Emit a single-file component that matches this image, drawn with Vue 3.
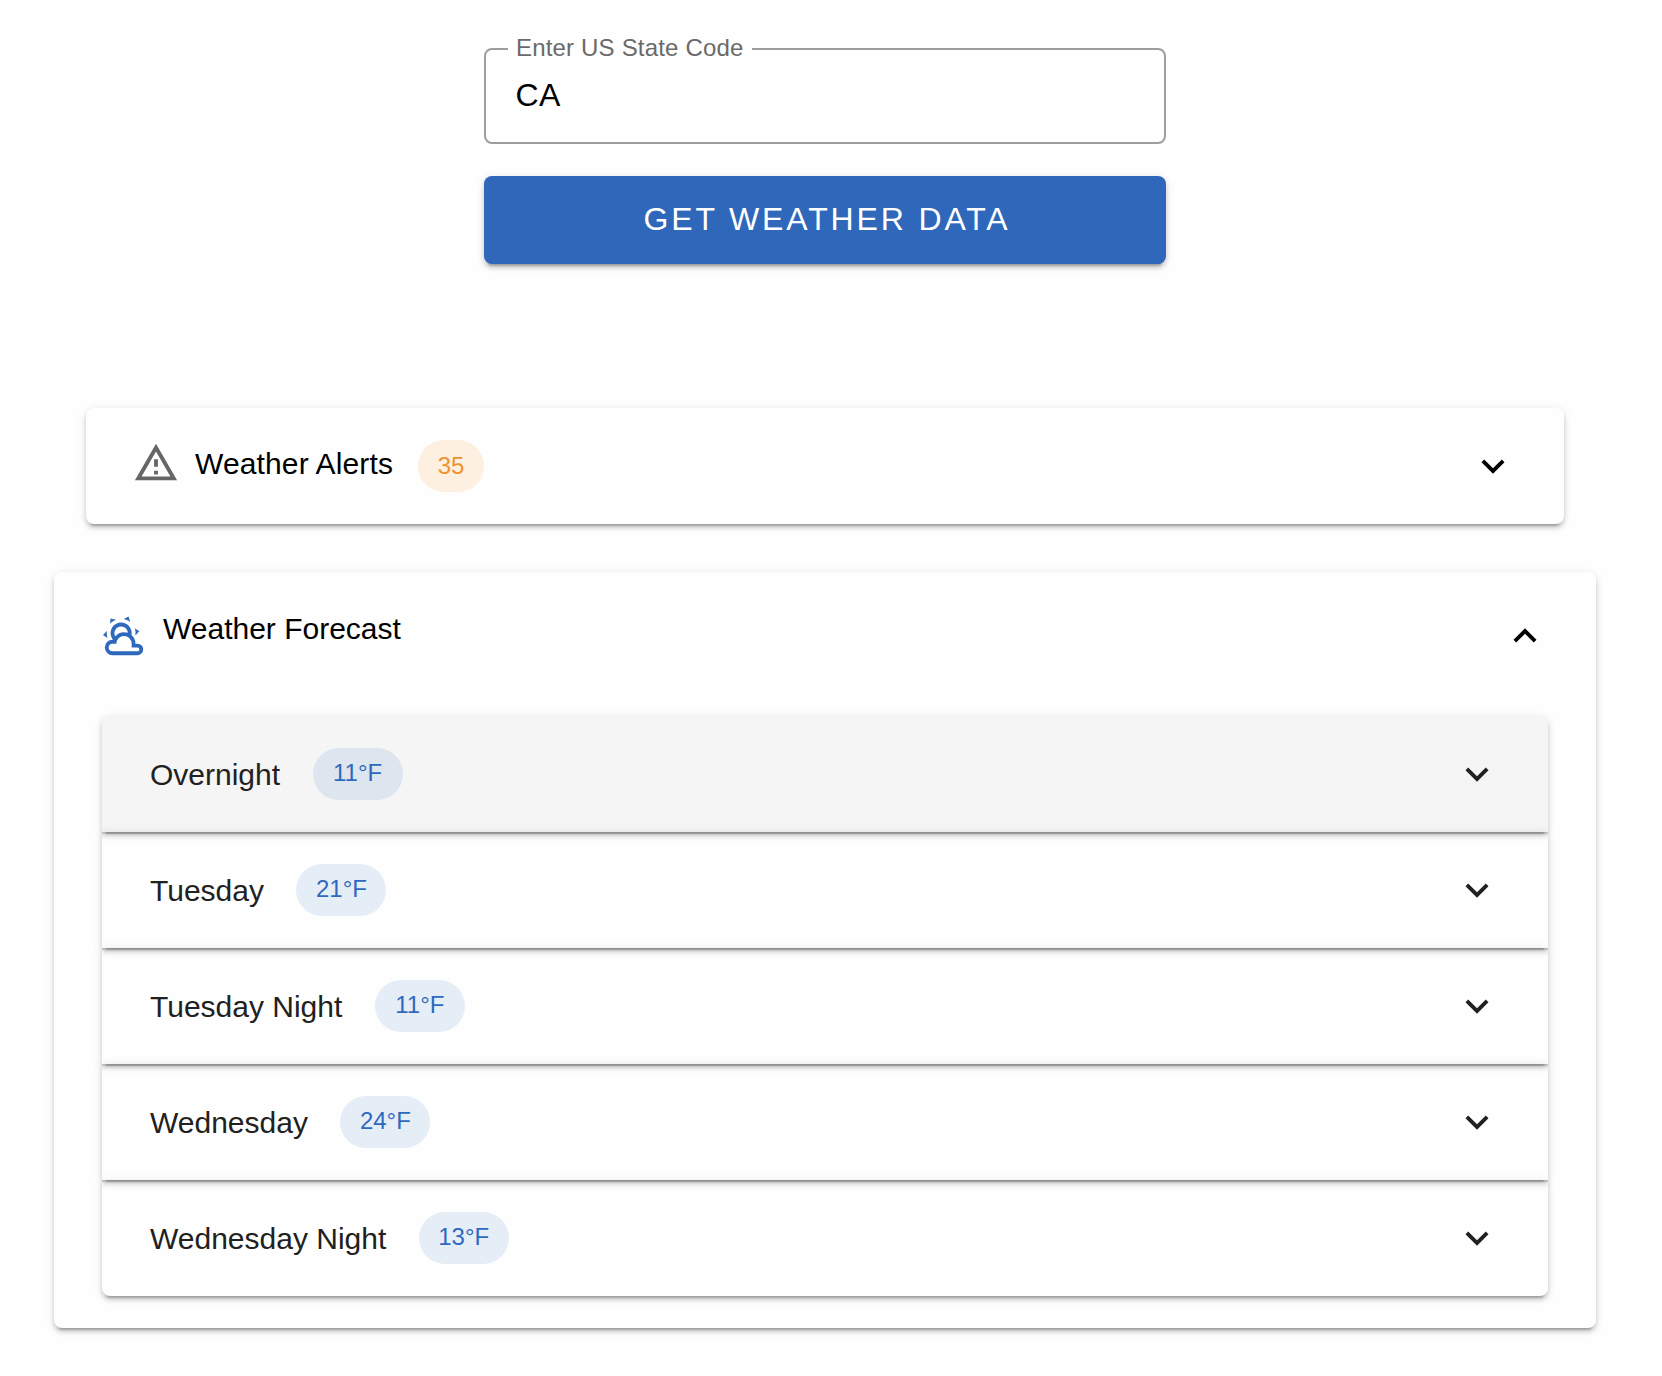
<script setup>
import { ref } from 'vue'

const stateCode = ref('CA')
const alertCount = 35
const periods = [
  { name: 'Overnight', temp: '11°F', active: true },
  { name: 'Tuesday', temp: '21°F' },
  { name: 'Tuesday Night', temp: '11°F' },
  { name: 'Wednesday', temp: '24°F' },
  { name: 'Wednesday Night', temp: '13°F' },
]

const icons = {
  down: 'M7.41,8.58L12,13.17L16.59,8.58L18,10L12,16L6,10L7.41,8.58Z',
  up: 'M7.41,15.41L12,10.83L16.59,15.41L18,14L12,8L6,14L7.41,15.41Z',
  alert: 'M12,2L1,21H23M12,6L19.53,19H4.47M11,10V14H13V10M11,16V18H13V16',
  weather:
    'M12.74,5.47C15.1,6.5 16.35,9.03 15.92,11.46C17.19,12.56 18,14.19 18,16V16.17C18.31,16.06 18.65,16 19,16A3,3 0 0,1 22,19A3,3 0 0,1 19,22H6A4,4 0 0,1 2,18A4,4 0 0,1 6,14H6.27C5,12.45 4.6,10.24 5.5,8.26C6.72,5.5 9.97,4.24 12.74,5.47M11.93,7.3C10.16,6.5 8.09,7.31 7.31,9.07C6.85,10.09 6.93,11.22 7.41,12.13C8.5,10.83 10.16,10 12,10C12.7,10 13.38,10.12 14,10.34C13.94,9.06 13.18,7.86 11.93,7.3M13.55,3.64C13,3.4 12.45,3.23 11.88,3.12L14.37,1.82L15.27,4.71C14.76,4.29 14.19,3.93 13.55,3.64M6.09,4.44C5.6,4.79 5.17,5.19 4.8,5.63L4.91,2.82L7.87,3.5C7.25,3.71 6.65,4.03 6.09,4.44M18,9.71C17.91,9.12 17.78,8.55 17.59,8L19.97,9.5L17.92,11.73C18.03,11.08 18.05,10.4 18,9.71M3.04,11.3C3.11,11.9 3.24,12.47 3.43,13L1.06,11.5L3.1,9.28C3,9.93 2.97,10.61 3.04,11.3M19,18H16V16A4,4 0 0,0 12,12A4,4 0 0,0 8,16H6A2,2 0 0,0 4,18A2,2 0 0,0 6,20H19A1,1 0 0,0 20,19A1,1 0 0,0 19,18Z',
}
</script>

<template>
  <main class="page">
    <form class="form" @submit.prevent>
      <div class="field">
        <label class="field-label" for="state">Enter US State Code</label>
        <input id="state" v-model="stateCode" class="field-input" type="text" />
      </div>
      <button class="submit" type="submit">GET WEATHER DATA</button>
    </form>

    <section class="panel alerts">
      <svg class="icon alert-icon" viewBox="0 0 24 24"><path :d="icons.alert" /></svg>
      <span class="title">Weather Alerts</span>
      <span class="chip chip-alert">{{ alertCount }}</span>
      <svg class="icon toggle" viewBox="0 0 24 24"><path :d="icons.down" /></svg>
    </section>

    <section class="panel forecast">
      <header class="forecast-head">
        <svg class="icon weather-icon" viewBox="0 0 24 24"><path :d="icons.weather" /></svg>
        <span class="title">Weather Forecast</span>
        <svg class="icon toggle" viewBox="0 0 24 24"><path :d="icons.up" /></svg>
      </header>
      <div class="rows">
        <div v-for="p in periods" :key="p.name" class="row" :class="{ active: p.active }">
          <span class="name">{{ p.name }}</span>
          <span class="chip chip-temp">{{ p.temp }}</span>
          <svg class="icon toggle" viewBox="0 0 24 24"><path :d="icons.down" /></svg>
        </div>
      </div>
    </section>
  </main>
</template>

<style>
body {
  background: #fefefe;
}
</style>

<style scoped>
* {
  box-sizing: border-box;
}
.page {
  height: 1376px;
  padding: 48px 66px 0 54px;
  display: flex;
  flex-direction: column;
  font-family: "Liberation Sans", Arial, sans-serif;
  color: #000;
}
.form {
  width: 682px;
  margin-left: 430px;
  display: flex;
  flex-direction: column;
  gap: 32px;
}
.field {
  position: relative;
  height: 96px;
  border: 2px solid #9e9e9e;
  border-radius: 8px;
}
.field-label {
  position: absolute;
  left: 22px;
  top: -16px;
  width: 244px;
  padding-left: 8px;
  background: #fefefe;
  font-size: 24px;
  line-height: 28px;
  letter-spacing: 0.18px;
  white-space: nowrap;
  color: #6a6a6a;
}
.field-input {
  display: block;
  width: 100%;
  height: 92px;
  padding: 0 30px 2px 29.5px;
  border: 0;
  outline: 0;
  background: transparent;
  font: 32px "Liberation Sans", Arial, sans-serif;
  letter-spacing: 0.3px;
  color: #000;
}
.submit {
  height: 88px;
  padding: 0 0 2px 4px;
  border: 0;
  border-radius: 8px;
  background: #2f67ba;
  color: #fff;
  font: 32px "Liberation Sans", Arial, sans-serif;
  letter-spacing: 2.857px;
  box-shadow: 0 6px 2px -4px rgba(0, 0, 0, 0.2), 0 4px 4px rgba(0, 0, 0, 0.14), 0 2px 10px rgba(0, 0, 0, 0.12);
}
.panel {
  border-radius: 8px;
  background: #fefefe;
  box-shadow: 0 6px 2px -4px rgba(0, 0, 0, 0.2), 0 4px 4px rgba(0, 0, 0, 0.14), 0 2px 10px rgba(0, 0, 0, 0.12);
}
.alerts {
  height: 116px;
  margin: 144px 32px 0;
  padding: 0 48px;
  display: flex;
  align-items: center;
}
.icon {
  width: 46px;
  height: 46px;
  flex: none;
  fill: currentColor;
}
.alert-icon {
  margin-left: -1px;
  margin-bottom: 6px;
  color: #666;
}
.title,
.name {
  font-size: 30px;
  line-height: 34px;
  white-space: nowrap;
}
.title {
  margin-left: 16px;
  margin-bottom: 4px;
}
.alerts .title {
  letter-spacing: 0.13px;
}
.toggle {
  margin-left: auto;
}
.chip {
  height: 52px;
  border-radius: 26px;
  display: flex;
  justify-content: center;
  font-size: 24px;
  line-height: 50px;
}
.chip-alert {
  width: 66px;
  margin-left: 25px;
  line-height: 52px;
  background: #fdf0e0;
  color: #ef9232;
}
.forecast {
  height: 756px;
  margin-top: 48px;
  padding: 0 48px;
}
.forecast-head {
  height: 144px;
  padding-bottom: 16px;
  display: flex;
  align-items: center;
}
.weather-icon {
  margin-left: -1px;
  color: #2f69bd;
}
.forecast-head .title {
  margin-bottom: 14px;
}
.row {
  position: relative;
  height: 116px;
  padding: 0 48px;
  display: flex;
  align-items: center;
  background: #fefefe;
  color: #212121;
}
.row::after {
  content: "";
  position: absolute;
  inset: 0;
  z-index: 1;
  pointer-events: none;
  border-radius: inherit;
  box-shadow: 0 6px 2px -4px rgba(0, 0, 0, 0.2), 0 4px 4px rgba(0, 0, 0, 0.14), 0 2px 10px rgba(0, 0, 0, 0.12);
}
.row + .row::after {
  border-top: 2px solid rgba(0, 0, 0, 0.12);
}
.row:first-child {
  border-radius: 8px 8px 0 0;
}
.row:last-child {
  border-radius: 0 0 8px 8px;
}
.row.active {
  background: #f5f5f5;
}
.name {
  margin-top: 2px;
}
.chip-temp {
  width: 90px;
  margin-left: 32.5px;
  background: #e5edf7;
  color: #2f69bd;
}
.active .chip-temp {
  background: #dde5ee;
}
</style>
